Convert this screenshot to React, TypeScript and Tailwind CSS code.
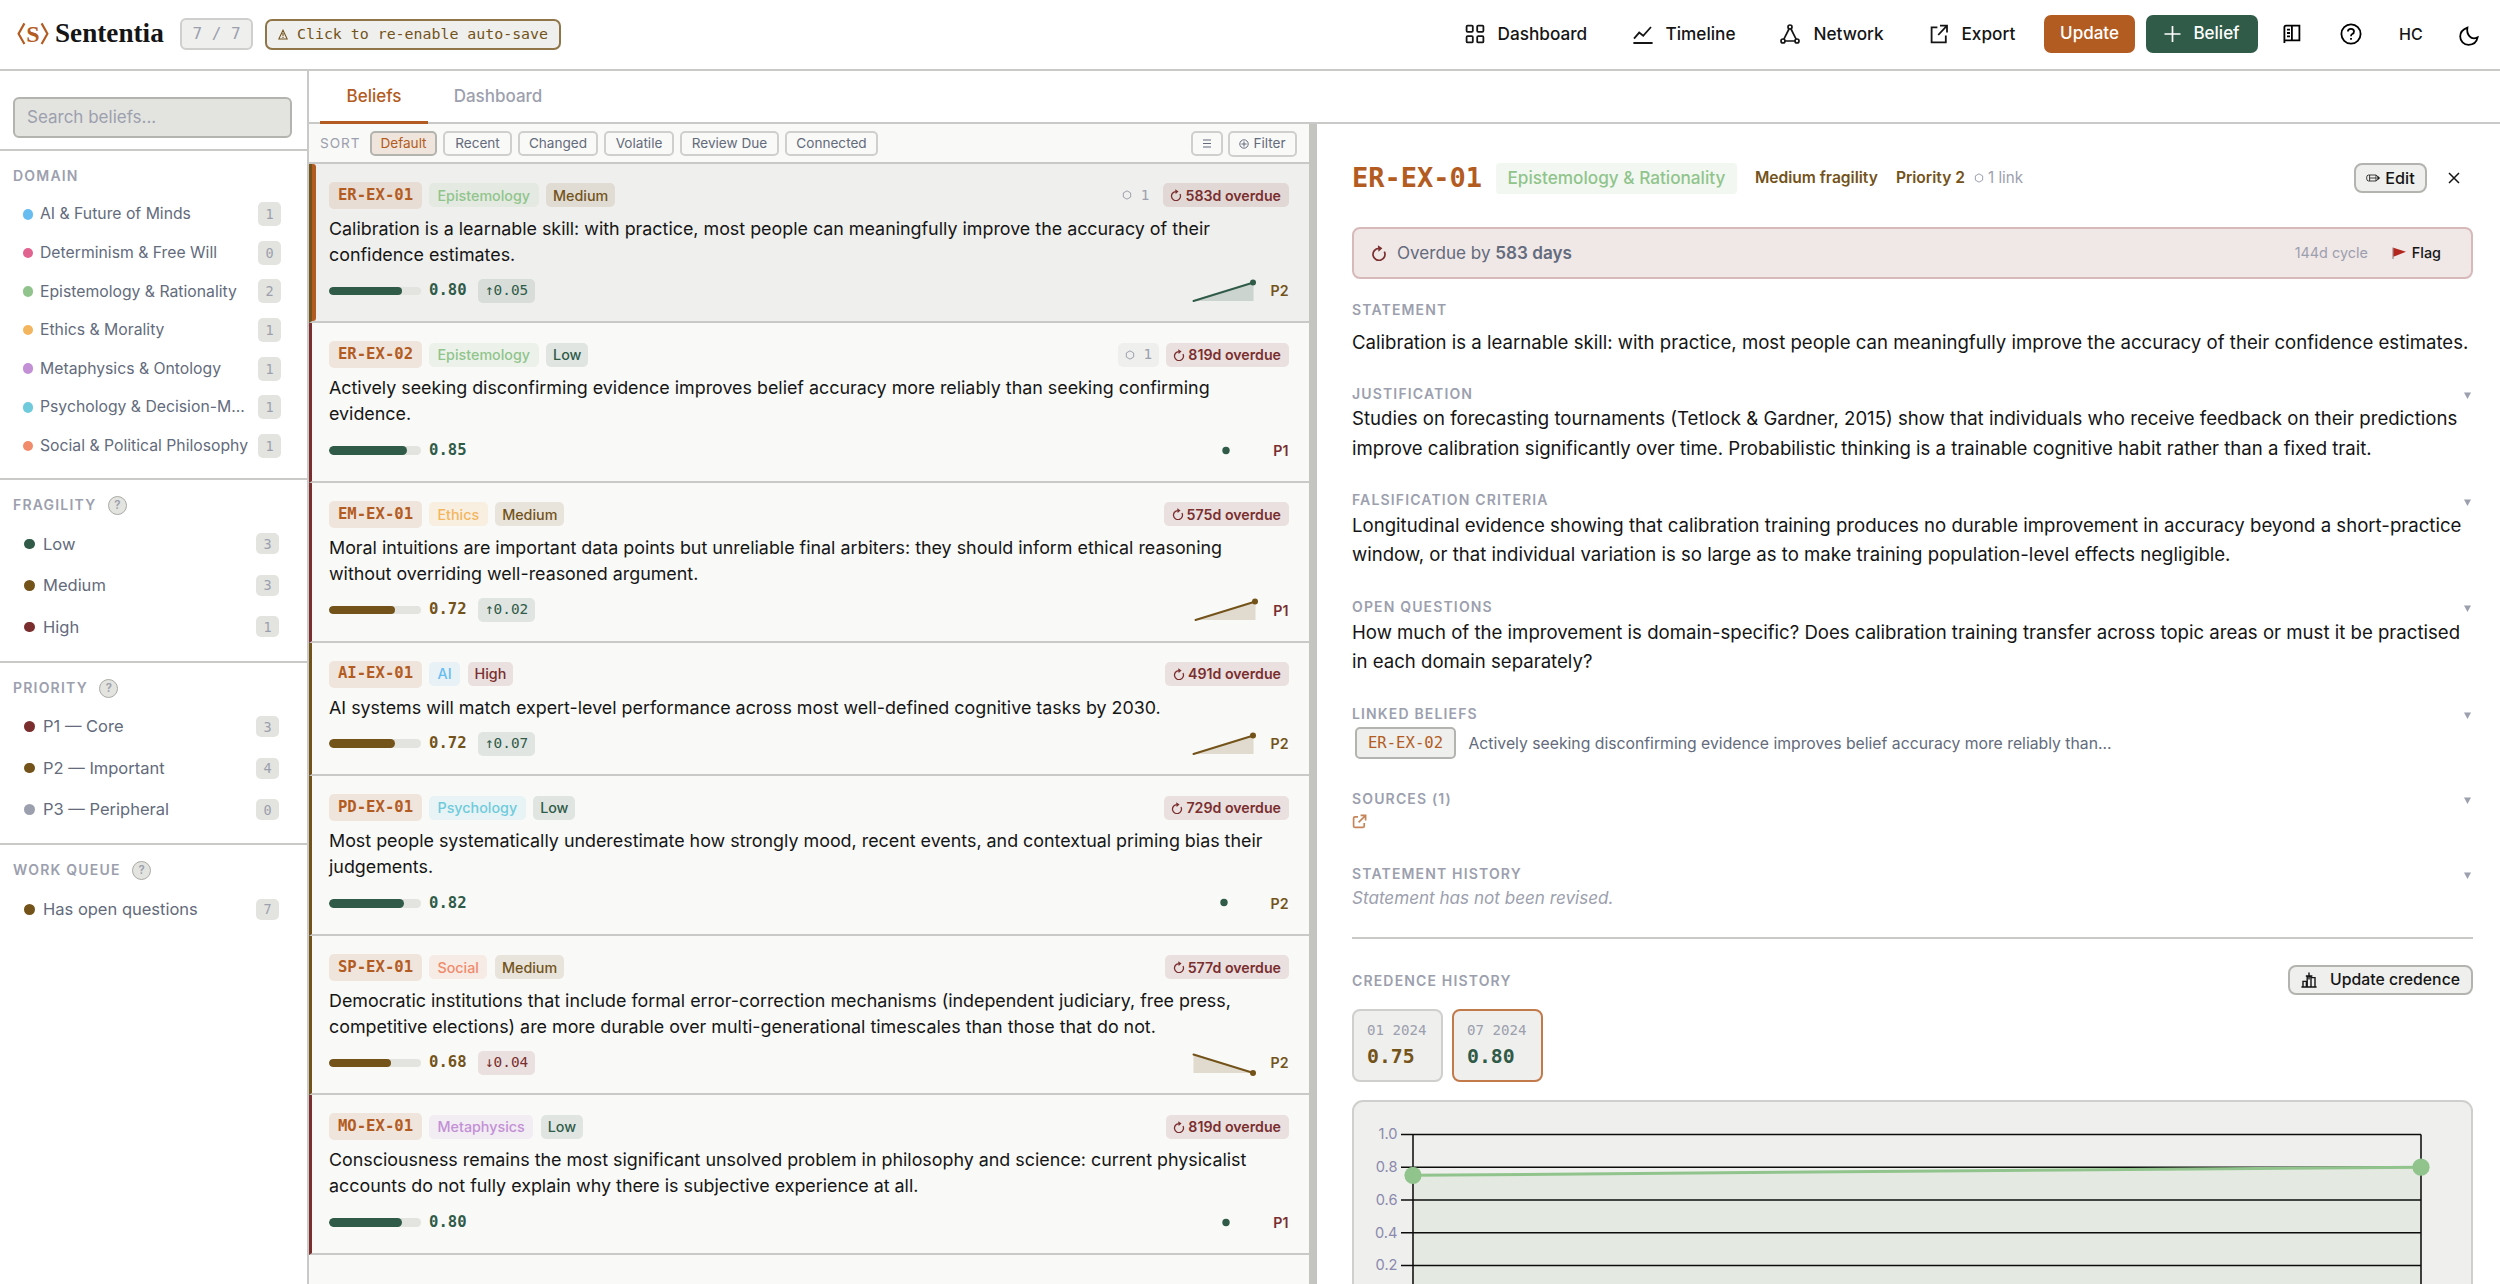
import React from 'react';

type Tone = 'green' | 'brown' | 'red';

interface Belief {
  id: string;
  domain: string;
  domainClass: string;
  fragility: string;
  fragilityTone: Tone;
  statement: string[];
  credence: number;
  delta?: string;
  deltaUp?: boolean;
  overdue: number;
  links?: number;
  priority: 'P1' | 'P2';
  trend: 'up' | 'down' | 'none';
  selected?: boolean;
}

const HEX: Record<Tone, string> = {
  green: '#2f5b48',
  brown: '#73531a',
  red: '#7a2e2e',
};

const TEXT: Record<Tone, string> = {
  green: 'text-[#2f5b48]',
  brown: 'text-[#73531a]',
  red: 'text-[#7a2e2e]',
};

const TAG: Record<Tone, string> = {
  green: 'text-[#2f5b48] bg-[#2f5b48]/12',
  brown: 'text-[#73531a] bg-[#73531a]/12',
  red: 'text-[#7a2e2e] bg-[#7a2e2e]/12',
};

const BAR: Record<Tone, string> = {
  green: 'bg-[#2f5b48]',
  brown: 'bg-[#73531a]',
  red: 'bg-[#7a2e2e]',
};

const MONO = "font-['DejaVu_Sans_Mono',monospace]";

const BELIEFS: Belief[] = [
  {
    id: 'ER-EX-01',
    domain: 'Epistemology',
    domainClass: 'text-[#90c48c] bg-[#90c48c]/12',
    fragility: 'Medium',
    fragilityTone: 'brown',
    statement: [
      'Calibration is a learnable skill: with practice, most people can meaningfully improve the accuracy of their',
      'confidence estimates.',
    ],
    credence: 0.8,
    delta: '0.05',
    deltaUp: true,
    overdue: 583,
    links: 1,
    priority: 'P2',
    trend: 'up',
    selected: true,
  },
  {
    id: 'ER-EX-02',
    domain: 'Epistemology',
    domainClass: 'text-[#90c48c] bg-[#90c48c]/12',
    fragility: 'Low',
    fragilityTone: 'green',
    statement: [
      'Actively seeking disconfirming evidence improves belief accuracy more reliably than seeking confirming',
      'evidence.',
    ],
    credence: 0.85,
    overdue: 819,
    links: 1,
    priority: 'P1',
    trend: 'none',
  },
  {
    id: 'EM-EX-01',
    domain: 'Ethics',
    domainClass: 'text-[#f3b65f] bg-[#f3b65f]/15',
    fragility: 'Medium',
    fragilityTone: 'brown',
    statement: [
      'Moral intuitions are important data points but unreliable final arbiters: they should inform ethical reasoning',
      'without overriding well-reasoned argument.',
    ],
    credence: 0.72,
    delta: '0.02',
    deltaUp: true,
    overdue: 575,
    priority: 'P1',
    trend: 'up',
  },
  {
    id: 'AI-EX-01',
    domain: 'AI',
    domainClass: 'text-[#68bdf0] bg-[#68bdf0]/12',
    fragility: 'High',
    fragilityTone: 'red',
    statement: ['AI systems will match expert-level performance across most well-defined cognitive tasks by 2030.'],
    credence: 0.72,
    delta: '0.07',
    deltaUp: true,
    overdue: 491,
    priority: 'P2',
    trend: 'up',
  },
  {
    id: 'PD-EX-01',
    domain: 'Psychology',
    domainClass: 'text-[#6fcbdc] bg-[#6fcbdc]/12',
    fragility: 'Low',
    fragilityTone: 'green',
    statement: [
      'Most people systematically underestimate how strongly mood, recent events, and contextual priming bias their',
      'judgements.',
    ],
    credence: 0.82,
    overdue: 729,
    priority: 'P2',
    trend: 'none',
  },
  {
    id: 'SP-EX-01',
    domain: 'Social',
    domainClass: 'text-[#f08c6c] bg-[#f08c6c]/12',
    fragility: 'Medium',
    fragilityTone: 'brown',
    statement: [
      'Democratic institutions that include formal error-correction mechanisms (independent judiciary, free press,',
      'competitive elections) are more durable over multi-generational timescales than those that do not.',
    ],
    credence: 0.68,
    delta: '0.04',
    deltaUp: false,
    overdue: 577,
    priority: 'P2',
    trend: 'down',
  },
  {
    id: 'MO-EX-01',
    domain: 'Metaphysics',
    domainClass: 'text-[#c390d6] bg-[#c390d6]/12',
    fragility: 'Low',
    fragilityTone: 'green',
    statement: [
      'Consciousness remains the most significant unsolved problem in philosophy and science: current physicalist',
      'accounts do not fully explain why there is subjective experience at all.',
    ],
    credence: 0.8,
    overdue: 819,
    priority: 'P1',
    trend: 'none',
  },
];

const DOMAINS = [
  { label: 'AI & Future of Minds', count: 1, dot: 'bg-[#68bdf0]' },
  { label: 'Determinism & Free Will', count: 0, dot: 'bg-[#e0648f]' },
  { label: 'Epistemology & Rationality', count: 2, dot: 'bg-[#90c48c]' },
  { label: 'Ethics & Morality', count: 1, dot: 'bg-[#f3b65f]' },
  { label: 'Metaphysics & Ontology', count: 1, dot: 'bg-[#c390d6]' },
  { label: 'Psychology & Decision-M...', count: 1, dot: 'bg-[#6fcbdc]' },
  { label: 'Social & Political Philosophy', count: 1, dot: 'bg-[#f08c6c]' },
];

const FILTERS = [
  {
    title: 'FRAGILITY',
    items: [
      { label: 'Low', count: 3, dot: 'bg-[#2f5b48]' },
      { label: 'Medium', count: 3, dot: 'bg-[#73531a]' },
      { label: 'High', count: 1, dot: 'bg-[#7a2e2e]' },
    ],
  },
  {
    title: 'PRIORITY',
    items: [
      { label: 'P1 — Core', count: 3, dot: 'bg-[#7a2e2e]' },
      { label: 'P2 — Important', count: 4, dot: 'bg-[#73531a]' },
      { label: 'P3 — Peripheral', count: 0, dot: 'bg-[#9ca0ae]' },
    ],
  },
  {
    title: 'WORK QUEUE',
    items: [{ label: 'Has open questions', count: 7, dot: 'bg-[#73531a]' }],
  },
];

const SORTS = [
  { label: 'Default', width: 'w-[67px]' },
  { label: 'Recent', width: 'w-[69px]' },
  { label: 'Changed', width: 'w-[80px]' },
  { label: 'Volatile', width: 'w-[70px]' },
  { label: 'Review Due', width: 'w-[99px]' },
  { label: 'Connected', width: 'w-[93px]' },
];

const Overdue = ({ size, className }: { size: number; className?: string }) => (
  <svg width={size} height={size} viewBox="0 0 16 16" fill="none" stroke="currentColor" strokeWidth="1.7" className={className}>
    <path d="M13.3 6.6A6 6 0 1 1 7.8 3.4" />
    <path d="M6.9 0.3L11.4 3.2L7.5 6.8Z" fill="currentColor" stroke="none" />
  </svg>
);

const Hexagon = ({ size }: { size: number }) => (
  <svg width={size} height={size} viewBox="0 0 12 12" fill="none" stroke="currentColor" strokeWidth="1.2">
    <path d="M6 1L10.4 3.5V8.5L6 11L1.6 8.5V3.5Z" />
  </svg>
);

function Header() {
  const nav = 'flex items-center text-[17.2px] font-medium text-[#151515] whitespace-nowrap';
  const icon = { fill: 'none', stroke: 'currentColor', strokeWidth: 1.8 } as const;
  return (
    <header className="h-[71px] shrink-0 flex items-center border-b-2 border-[#c9c9c7] pb-[1px] pl-[16px] pr-[21px]">
      <svg width="34" height="26" viewBox="0 0 34 26" fill="none" stroke="#b35c22" strokeWidth="2.2" className="shrink-0">
        <path d="M8.4 2.4L2.6 12.7L8.4 23M25.6 2.4L31.4 12.7L25.6 23" />
        <text x="17" y="20.6" textAnchor="middle" fontFamily="Liberation Serif, serif" fontWeight="700" fontSize="24" fill="#b35c22" stroke="none">
          S
        </text>
      </svg>
      <span className="ml-[5px] w-[108px] font-['Liberation_Serif',serif] font-bold text-[27.2px] leading-none text-[#151515]">
        Sententia
      </span>
      <span className={`${MONO} ml-[17px] w-[73px] h-[32px] rounded-[6px] border-2 border-[#cfcfcd] bg-[#efefed] text-[#9ca0ae] text-[16px] flex items-center justify-center whitespace-pre`}>
        7 / 7
      </span>
      <button className={`${MONO} ml-[12px] w-[296px] h-[31px] rounded-[7px] border-2 border-[#8f7547] bg-[#efefed] text-[#73531a] text-[14.9px] flex items-center justify-center gap-[9px] whitespace-nowrap`}>
        <svg width="10" height="11" viewBox="0 0 10 11" fill="none" stroke="currentColor" strokeWidth="1.1">
          <path d="M5 1.2L9.2 10H0.8ZM5 4V7M5 7.8V9" />
        </svg>
        Click to re-enable auto-save
      </button>

      <nav className="ml-auto flex items-center">
        <a className={nav}>
          <svg width="20" height="20" viewBox="0 0 20 20" {...icon} className="mr-[13px]">
            <rect x="1.6" y="1.6" width="6.2" height="6.2" rx="1" />
            <rect x="12.2" y="1.6" width="6.2" height="6.2" rx="1" />
            <rect x="1.6" y="12.2" width="6.2" height="6.2" rx="1" />
            <rect x="12.2" y="12.2" width="6.2" height="6.2" rx="1" />
          </svg>
          <span className="w-[90px]">Dashboard</span>
        </a>
        <a className={`${nav} ml-[45px]`}>
          <svg width="20" height="20" viewBox="0 0 20 20" {...icon} className="mr-[13px]">
            <path d="M1 14.6L6.2 8.6L10.2 11.8L18 3M0.4 19H19.6" />
          </svg>
          <span className="w-[70px]">Timeline</span>
        </a>
        <a className={`${nav} ml-[44px]`}>
          <svg width="20" height="20" viewBox="0 0 20 20" {...icon} strokeWidth={1.7} className="mr-[14px]">
            <circle cx="10" cy="3" r="2" />
            <circle cx="3" cy="17" r="2" />
            <circle cx="17" cy="17" r="2" />
            <path d="M9 5L3.9 15.1M11 5L16.1 15.1M5 17H15" />
          </svg>
          <span className="w-[69px]">Network</span>
        </a>
        <a className={`${nav} ml-[47px]`}>
          <svg width="19" height="20" viewBox="0 0 19 20" {...icon} className="mr-[13px]">
            <path d="M7.4 3.4H1.6V18.4H15.8V11.4M10 1.6H17V8.4M17 1.6L8.2 11" />
          </svg>
          <span className="w-[54px]">Export</span>
        </a>
        <button className="ml-[28.5px] w-[91px] h-[38px] rounded-[7px] bg-[#b35c22] text-white text-[17px] font-medium">Update</button>
        <button className="ml-[11px] w-[112px] h-[38px] rounded-[7px] bg-[#2f5b48] text-white text-[17px] font-medium flex items-center justify-center gap-[12px]">
          <svg width="17" height="18" viewBox="0 0 17 18" stroke="currentColor" strokeWidth="1.7">
            <path d="M8.5 1V17M0.5 9H16.5" />
          </svg>
          Belief
        </button>
        <svg width="18" height="20" viewBox="0 0 18 20" {...icon} className="ml-[25px]">
          <path d="M1.4 19V3.2Q1.4 1.6 3 1.6H16.4V16.4H1.4M8.9 1.6V16.4M4 5.6H7M4 9H7M4 12.4H7" />
        </svg>
        <svg width="22" height="22" viewBox="0 0 22 22" {...icon} className="ml-[39px]">
          <circle cx="11" cy="11" r="9.6" />
          <path d="M7.9 8.6Q7.9 5.8 11 5.8Q14 5.8 14 8.4Q14 10.2 12.2 11Q11 11.6 11 13.2M11 15V16.8" />
        </svg>
        <span className="ml-[37px] w-[23px] text-[16px] font-medium text-[#151515]">HC</span>
        <svg width="20" height="20" viewBox="0 0 20 20" {...icon} className="ml-[37px] mt-[3px]">
          <path d="M8.4 1.6C3.6 3.4 1.2 6.8 1.2 10.4C1.2 15 4.8 18.8 9.6 18.8C14 18.8 17.6 16.4 18.6 11.4C15.4 13 12.4 12.4 10.6 10.4C8.4 8 7.8 5 8.4 1.6Z" />
        </svg>
      </nav>
    </header>
  );
}

function Sidebar() {
  return (
    <aside className="w-[309px] shrink-0 border-r-2 border-[#c9c9c7] flex flex-col">
      <div className="h-[80px] shrink-0 border-b-2 border-[#c9c9c7] pt-[26px] pl-[13px]">
        <input
          placeholder="Search beliefs..."
          className="block w-[279px] h-[41px] rounded-[6px] border-2 border-[#b3b3af] bg-[#e3e4df] px-[12px] pb-[1px] text-[17px] placeholder:text-[#9ca0ae] outline-none"
        />
      </div>

      <section className="h-[329px] shrink-0 border-b-2 border-[#c9c9c7] pt-[14.5px]">
        <h2 className="pl-[13px] h-[20px] leading-[20px] text-[14px] font-semibold tracking-[1.2px] text-[#9ca0ae]">DOMAIN</h2>
        <ul className="pt-[9.5px]">
          {DOMAINS.map((d) => (
            <li key={d.label} className="h-[38.6px] flex items-center pl-[22.5px] pr-[26px]">
              <span className={`w-[10.5px] h-[10.5px] rounded-full ${d.dot}`} />
              <span className="ml-[7px] flex-1 whitespace-nowrap text-[15.75px] text-[#636b7c]">{d.label}</span>
              <span className={`${MONO} w-[23px] h-[24px] rounded-[5px] bg-[#e3e4df] text-[13.5px] text-[#9ca0ae] flex items-center justify-center`}>
                {d.count}
              </span>
            </li>
          ))}
        </ul>
      </section>

      {FILTERS.map((f, i) => (
        <section key={f.title} className={`h-[182.7px] shrink-0 pt-[14.5px] ${i < 2 ? 'border-b-2 border-[#c9c9c7]' : ''}`}>
          <h2 className="pl-[13px] h-[20px] flex items-center text-[14px] font-semibold tracking-[1.2px] text-[#9ca0ae]">
            {f.title}
            <span className="ml-[11.5px] mt-[2px] w-[19px] h-[19px] rounded-full border-[1.5px] border-[#a9a9a5] bg-[#e3e4df] flex items-center justify-center text-[11.5px] tracking-normal">
              ?
            </span>
          </h2>
          <ul className="pt-[8.7px]">
            {f.items.map((item) => (
              <li key={item.label} className="h-[41.5px] flex items-center pl-[24px] pr-[28px]">
                <span className={`w-[10.5px] h-[10.5px] rounded-full ${item.dot}`} />
                <span className="ml-[8.5px] flex-1 whitespace-nowrap text-[16.5px] text-[#636b7c]">{item.label}</span>
                <span className={`${MONO} w-[23px] h-[21px] rounded-[5px] bg-[#e3e4df] text-[13.5px] text-[#9ca0ae] flex items-center justify-center`}>
                  {item.count}
                </span>
              </li>
            ))}
          </ul>
        </section>
      ))}
    </aside>
  );
}

function Sparkline({ trend, color }: { trend: Belief['trend']; color: string }) {
  return (
    <svg width="66" height="26" viewBox="0 0 66 26" fill="none" className="shrink-0">
      {trend === 'none' && <circle cx="34" cy="12.5" r="3.7" fill={color} />}
      {trend === 'up' && (
        <>
          <path d="M3.5 23L63.5 4.5V23Z" fill={color} fillOpacity="0.18" />
          <path d="M3.5 23L63.5 4.5" stroke={color} strokeWidth="2" strokeLinecap="round" />
          <circle cx="63" cy="4.5" r="3" fill={color} />
        </>
      )}
      {trend === 'down' && (
        <>
          <path d="M3.5 4.5L63.5 23H3.5Z" fill={color} fillOpacity="0.18" />
          <path d="M3.5 4.5L63.5 23" stroke={color} strokeWidth="2" strokeLinecap="round" />
          <circle cx="63" cy="23" r="3" fill={color} />
        </>
      )}
    </svg>
  );
}

function BeliefCard({ belief: b }: { belief: Belief }) {
  const tone: Tone = b.credence >= 0.8 ? 'green' : 'brown';
  const edge = b.priority === 'P1' ? 'border-l-[#7a2e2e]' : 'border-l-[#73531a]';
  return (
    <article
      className={`shrink-0 flex border-l-[3px] border-b-2 border-b-[#c9c9c7] ${edge} ${b.selected ? 'bg-[#efefed]' : ''} ${
        b.statement.length === 2 ? 'h-[159.6px]' : 'h-[133.6px]'
      }`}
    >
      <span className={`w-[4px] shrink-0 rounded-r-[3px] ${b.selected ? 'bg-[#b35c22]' : ''}`} />
      <div className="flex-1 pl-[13px] pr-[20.5px] pt-[18px]">
        <div className="h-[27px] flex items-center text-[14.3px]">
          <span className={`${MONO} w-[93px] h-[27px] rounded-[5px] bg-[#b35c22]/12 text-[#b35c22] text-[15.6px] font-bold flex items-center justify-center`}>
            {b.id}
          </span>
          <span className={`ml-[7px] h-[24px] px-[8.5px] rounded-[5px] font-medium flex items-center ${b.domainClass}`}>{b.domain}</span>
          <span className={`ml-[7.5px] h-[24px] px-[7px] rounded-[5px] font-medium flex items-center ${TAG[b.fragilityTone]}`}>{b.fragility}</span>
          <span className="ml-auto flex items-center gap-[7px]">
            {b.links && (
              <span className={`${MONO} w-[41px] h-[24px] rounded-[5px] bg-[#efefed] text-[#9ca0ae] flex items-center justify-center gap-[9px]`}>
                <Hexagon size={10} />
                {b.links}
              </span>
            )}
            <span className="h-[24px] px-[7.5px] rounded-[5px] font-semibold bg-[#7a2e2e]/12 text-[#7a2e2e] flex items-center gap-[3px]">
              <Overdue size={12} />
              <span className="text-[14.2px]">{b.overdue}d overdue</span>
            </span>
          </span>
        </div>
        <div className="mt-[7px] text-[17.88px] leading-[26.1px] text-[#151515] whitespace-nowrap">
          {b.statement.map((line) => (
            <p key={line}>{line}</p>
          ))}
        </div>
        <div className="mt-[11px] h-[24px] flex items-center">
          <span className="w-[91.5px] h-[8.5px] rounded-full bg-[#e3e4df] overflow-hidden">
            <span className={`block h-full rounded-full ${BAR[tone]}`} style={{ width: `${b.credence * 100}%` }} />
          </span>
          <span className={`${MONO} ml-[8.5px] text-[15.6px] font-bold ${TEXT[tone]}`}>{b.credence.toFixed(2)}</span>
          {b.delta && (
            <span className={`${MONO} ml-[11.5px] w-[57px] h-[24px] rounded-[5px] text-[14.4px] flex items-center justify-center ${b.deltaUp ? TAG.green : TAG.red}`}>
              {b.deltaUp ? '↑' : '↓'}
              {b.delta}
            </span>
          )}
          <span className="ml-auto flex items-center gap-[15px]">
            <Sparkline trend={b.trend} color={HEX[tone]} />
            <span className={`text-[14.2px] font-semibold ${b.priority === 'P1' ? TEXT.red : TEXT.brown}`}>{b.priority}</span>
          </span>
        </div>
      </div>
    </article>
  );
}

function BeliefList() {
  return (
    <div className="w-[1000px] shrink-0 flex flex-col bg-[#f9f9f7] overflow-hidden">
      <div className="h-[40.3px] shrink-0 flex items-center border-b-2 border-[#c9c9c7] pt-[2px] pl-[11px] pr-[12px] text-[13.6px]">
        <span className="w-[50px] tracking-[1px] text-[#9ca0ae]">SORT</span>
        <div className="flex gap-[6px]">
          {SORTS.map((s, i) => (
            <button
              key={s.label}
              className={`${s.width} h-[25px] rounded-[5px] border-2 leading-none ${
                i === 0 ? 'border-[#b3b3af] bg-[#f0e5dd] text-[#b35c22]' : 'border-[#cfcfcd] text-[#636b7c]'
              }`}
            >
              {s.label}
            </button>
          ))}
        </div>
        <button className="ml-auto w-[32px] h-[25px] rounded-[5px] border-2 border-[#cfcfcd] text-[#636b7c] flex items-center justify-center">
          <svg width="8" height="9" viewBox="0 0 8 9" stroke="currentColor" strokeWidth="1.1">
            <path d="M0 1H8M0 4.5H8M0 8H8" />
          </svg>
        </button>
        <button className="ml-[5px] w-[69px] h-[26px] rounded-[5px] border-2 border-[#cfcfcd] text-[#636b7c] flex items-center justify-center gap-[4px]">
          <svg width="10" height="10" viewBox="0 0 10 10" fill="none" stroke="currentColor" strokeWidth="1">
            <circle cx="5" cy="5" r="4.2" />
            <path d="M5 2.4V7.6M2.4 5H7.6" />
          </svg>
          Filter
        </button>
      </div>
      {BELIEFS.map((b) => (
        <BeliefCard key={b.id} belief={b} />
      ))}
    </div>
  );
}

const Label = ({ children, toggle = true }: { children: React.ReactNode; toggle?: boolean }) => (
  <div className="h-[18px] flex items-center justify-between text-[14px] font-semibold tracking-[1.15px] text-[#9ca0ae]">
    <span>{children}</span>
    {toggle && (
      <svg width="7" height="7" viewBox="0 0 6 6" fill="currentColor" className="mr-[2px] mt-[5px]">
        <path d="M0 0.5H6L3 6Z" />
      </svg>
    )}
  </div>
);

const PARAGRAPHS = [
  {
    title: 'JUSTIFICATION',
    lines: [
      'Studies on forecasting tournaments (Tetlock & Gardner, 2015) show that individuals who receive feedback on their predictions',
      'improve calibration significantly over time. Probabilistic thinking is a trainable cognitive habit rather than a fixed trait.',
    ],
  },
  {
    title: 'FALSIFICATION CRITERIA',
    lines: [
      'Longitudinal evidence showing that calibration training produces no durable improvement in accuracy beyond a short-practice',
      'window, or that individual variation is so large as to make training population-level effects negligible.',
    ],
  },
  {
    title: 'OPEN QUESTIONS',
    lines: [
      'How much of the improvement is domain-specific? Does calibration training transfer across topic areas or must it be practised',
      'in each domain separately?',
    ],
  },
];

function CredenceChart() {
  const ticks = ['1.0', '0.8', '0.6', '0.4', '0.2'];
  return (
    <div className="mt-[17.5px] h-[260px] shrink-0 rounded-[11px] border-2 border-[#cfcfcd] bg-[#efefed] overflow-hidden">
      <svg width="1117" height="257" viewBox="0 0 1117 257" fill="none">
        <path d="M59 73.3L1067 65.2V257H59Z" fill="#90c48c" fillOpacity="0.11" />
        <path d="M59 32.5V257M1067 32.5V257" stroke="#151515" strokeWidth="1.6" />
        {ticks.map((t, i) => (
          <g key={t}>
            <path d={`M47 ${32.5 + i * 32.75}H1067`} stroke="#0c0c0c" strokeWidth="1.6" />
            <text x="43.5" y={37.4 + i * 32.75} textAnchor="end" fontSize="14.6" fontFamily="Inter, sans-serif" fill="#8b8aae">
              {t}
            </text>
          </g>
        ))}
        <path d="M59 73.3L1067 65.2" stroke="#90c48c" strokeWidth="3" />
        <circle cx="59" cy="73.3" r="8.6" fill="#90c48c" />
        <circle cx="1067" cy="65.2" r="8.6" fill="#90c48c" />
      </svg>
    </div>
  );
}

function Detail() {
  return (
    <section className="flex-1 bg-white pl-[35px] pr-[27px] flex flex-col overflow-hidden">
      <div className="mt-[38.5px] h-[32px] shrink-0 flex items-center whitespace-nowrap">
        <h1 className={`${MONO} w-[144px] text-[27px] font-bold text-[#b35c22]`}>ER-EX-01</h1>
        <span className="h-[31px] px-[11.5px] rounded-[4px] bg-[#90c48c]/12 text-[#90c48c] text-[17.2px] font-medium flex items-center">
          Epistemology &amp; Rationality
        </span>
        <span className="ml-[18px] text-[15.6px] font-semibold text-[#73531a]">Medium fragility</span>
        <span className="ml-[18px] text-[15.6px] font-semibold text-[#73531a]">Priority 2</span>
        <span className="ml-[9px] text-[15.2px] text-[#9ca0ae] flex items-center gap-[4px]">
          <Hexagon size={10} />1 link
        </span>
        <button className="ml-auto w-[73px] h-[30px] rounded-[8px] border-2 border-[#b3b3af] bg-[#efefed] text-[16.2px] leading-none font-medium text-[#151515] flex items-center justify-center gap-[5px]">
          <svg width="14" height="8" viewBox="0 0 14 8" fill="none" stroke="currentColor" strokeWidth="0.8">
            <path d="M2.4 1H10L13.4 4L10 7H2.4Q0.6 7 0.6 4Q0.6 1 2.4 1ZM3.6 1V7M10 1V7M3.6 4H10" />
            <path d="M11.8 2.6L13.4 4L11.8 5.4Z" fill="currentColor" />
          </svg>
          Edit
        </button>
        <svg width="12" height="12" viewBox="0 0 12 12" stroke="#151515" strokeWidth="1.5" className="ml-[21px] mr-[13px]">
          <path d="M1 1L11 11M11 1L1 11" />
        </svg>
      </div>

      <div className="mt-[32.5px] h-[52px] shrink-0 rounded-[8px] border-2 border-[#d8b9b9] bg-[#f0e7e7] pl-[17px] pr-[30px] flex items-center text-[17.1px] text-[#636b7c]">
        <Overdue size={16} className="text-[#7a2e2e] mr-[10px]" />
        <span>
          Overdue by <b className="font-semibold">583 days</b>
        </span>
        <span className="ml-auto text-[14.4px] text-[#9ca0ae]">144d cycle</span>
        <svg width="14" height="12" viewBox="0 0 14 12" className="ml-[24px] mr-[6px]">
          <path d="M1 0.5V12" stroke="#8a7878" strokeWidth="1" />
          <path d="M1.4 0.8L14 4.8L1.4 9.8Z" fill="#b3261e" />
        </svg>
        <span className="text-[14.4px] font-medium text-[#151515]">Flag</span>
      </div>

      <div className="mt-[21.5px] shrink-0 whitespace-nowrap">
        <Label toggle={false}>STATEMENT</Label>
        <p className="mt-[9.5px] text-[18.6px] leading-[29.2px] text-[#151515]">
          Calibration is a learnable skill: with practice, most people can meaningfully improve the accuracy of their confidence estimates.
        </p>
      </div>

      <div className="mt-[27.5px] shrink-0 flex flex-col gap-[28px] whitespace-nowrap">
        {PARAGRAPHS.map((p) => (
          <div key={p.title}>
            <Label>{p.title}</Label>
            <div className="mt-[2.2px] text-[18.6px] leading-[29.2px] text-[#151515]">
              {p.lines.map((line) => (
                <p key={line}>{line}</p>
              ))}
            </div>
          </div>
        ))}
      </div>

      <div className="mt-[28.4px] shrink-0 whitespace-nowrap">
        <Label>LINKED BELIEFS</Label>
        <div className="mt-[5px] pl-[3px] flex items-center">
          <span className={`${MONO} w-[101px] h-[32px] rounded-[5px] border-2 border-[#b3b3af] bg-[#efefed] text-[#b35c22] text-[15.6px] flex items-center justify-center`}>
            ER-EX-02
          </span>
          <span className="ml-[12.5px] text-[15.75px] text-[#636b7c]">Actively seeking disconfirming evidence improves belief accuracy more reliably than...</span>
        </div>
      </div>

      <div className="mt-[30px] shrink-0">
        <Label>SOURCES (1)</Label>
        <svg width="15" height="15" viewBox="0 0 15 15" fill="none" stroke="#b35c22" strokeOpacity="0.75" strokeWidth="1.7" className="mt-[7px]">
          <path d="M6 2.8H3Q1.6 2.8 1.6 4.2V12Q1.6 13.4 3 13.4H10.8Q12.2 13.4 12.2 12V9M8.6 1.4H13.6V6.4M13.4 1.6L6.6 8.4" />
        </svg>
      </div>

      <div className="mt-[35px] shrink-0">
        <Label>STATEMENT HISTORY</Label>
        <p className="mt-[3px] h-[26px] leading-[26px] text-[17.1px] italic text-[#9ca0ae]">Statement has not been revised.</p>
      </div>

      <div className="mt-[26px] shrink-0 border-t-2 border-[#c9c9c7] pt-[26px] flex items-center justify-between">
        <Label toggle={false}>CREDENCE HISTORY</Label>
        <button className="w-[185px] h-[30px] rounded-[8px] border-2 border-[#b3b3af] bg-[#efefed] text-[15.8px] leading-none font-medium text-[#151515] flex items-center justify-center gap-[13px] whitespace-nowrap">
          <svg width="16" height="16" viewBox="0 0 16 16" fill="none" stroke="currentColor" strokeWidth="1.4">
            <path d="M0.4 15H15.6M2 15V9.4H5.4V15M6.2 15V4.6H10V15M10.4 5.6H14V15M8 0.4V7.6M4.8 4H11.4" />
          </svg>
          Update credence
        </button>
      </div>

      <div className="mt-[14px] shrink-0 flex gap-[9px]">
        {[
          { date: '01 2024', value: '0.75', tone: TEXT.brown, border: 'border-[#cfcfcd]' },
          { date: '07 2024', value: '0.80', tone: TEXT.green, border: 'border-[#c27a4a]' },
        ].map((h) => (
          <div key={h.date} className={`${MONO} w-[91px] h-[73px] rounded-[8px] border-2 bg-[#efefed] pl-[13px] pt-[8px] whitespace-nowrap ${h.border}`}>
            <div className="h-[22px] leading-[22px] text-[14.1px] text-[#9ca0ae]">{h.date}</div>
            <div className={`h-[32px] leading-[32px] text-[19.8px] font-bold ${h.tone}`}>{h.value}</div>
          </div>
        ))}
      </div>

      <CredenceChart />
    </section>
  );
}

export default function App() {
  return (
    <div className="w-[2500px] h-[1284px] flex flex-col overflow-hidden bg-white font-[Inter,sans-serif]">
      <Header />
      <div className="flex-1 min-h-0 flex">
        <Sidebar />
        <main className="flex-1 min-w-0 flex flex-col">
          <div className="h-[52.5px] shrink-0 flex border-b-2 border-[#c9c9c7] pl-[11px] text-[17px] font-medium">
            <button className="w-[108px] h-[52.5px] border-b-[3px] border-[#b35c22] pt-[1px] text-[#b35c22]">Beliefs</button>
            <button className="w-[140px] text-[#9ca0ae]">Dashboard</button>
          </div>
          <div className="flex-1 min-h-0 flex">
            <BeliefList />
            <div className="w-[8px] shrink-0 bg-[#c4c4c0]" />
            <Detail />
          </div>
        </main>
      </div>
    </div>
  );
}
